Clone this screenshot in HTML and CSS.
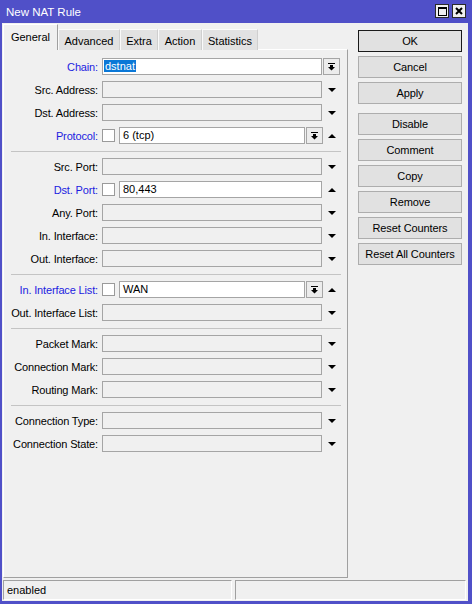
FILE: index.html
```html
<!DOCTYPE html>
<html>
<head>
<meta charset="utf-8">
<link rel="stylesheet" href="styles.css">
</head>
<body>
<div class="window">
  <div class="titlebar">
    <span class="title">New NAT Rule</span>
    <div class="tbtns">
      <span class="tbtn"><svg width="9" height="9" viewBox="0 0 9 9"><rect x="0.5" y="0.5" width="8" height="8" fill="none" stroke="#000"/><rect x="0" y="0" width="9" height="2" fill="#000"/></svg></span>
      <span class="tbtn"><svg width="8" height="8" viewBox="0 0 8 8"><path d="M1 1L7 7M7 1L1 7" stroke="#000" stroke-width="2"/></svg></span>
    </div>
  </div>
  <div class="client">
    <div class="main">
      <div class="left">
        <div class="tabs">
          <div class="tab active w-general">General</div>
          <div class="tab w-adv">Advanced</div>
          <div class="tab w-extra">Extra</div>
          <div class="tab w-action">Action</div>
          <div class="tab w-stats">Statistics</div>
        </div>
        <div class="panel">
          <div class="row">
            <span class="lbl blue">Chain:</span>
            <div class="inp white"><span class="sel">dstnat</span></div>
            <span class="ddbtn"><svg width="7" height="8" viewBox="0 0 7 8"><rect x="0" y="0" width="7" height="1" fill="#000"/><path d="M2 2h3v2h2L3.5 7.5L0 4h2z" fill="#000"/></svg></span>
          </div>
          <div class="row"><span class="lbl">Src. Address:</span><div class="inp"></div><span class="arrow down"></span></div>
          <div class="row"><span class="lbl">Dst. Address:</span><div class="inp"></div><span class="arrow down"></span></div>
          <div class="row">
            <span class="lbl blue">Protocol:</span>
            <span class="chk"></span>
            <div class="inp white short">6 (tcp)</div>
            <span class="ddbtn"><svg width="7" height="8" viewBox="0 0 7 8"><rect x="0" y="0" width="7" height="1" fill="#000"/><path d="M2 2h3v2h2L3.5 7.5L0 4h2z" fill="#000"/></svg></span>
            <span class="arrow up small"></span>
          </div>
          <div class="sep"></div>
          <div class="row"><span class="lbl">Src. Port:</span><div class="inp"></div><span class="arrow down"></span></div>
          <div class="row">
            <span class="lbl blue">Dst. Port:</span>
            <span class="chk"></span>
            <div class="inp white mid">80,443</div>
            <span class="arrow up"></span>
          </div>
          <div class="row"><span class="lbl">Any. Port:</span><div class="inp"></div><span class="arrow down"></span></div>
          <div class="row"><span class="lbl">In. Interface:</span><div class="inp"></div><span class="arrow down"></span></div>
          <div class="row"><span class="lbl">Out. Interface:</span><div class="inp"></div><span class="arrow down"></span></div>
          <div class="sep"></div>
          <div class="row">
            <span class="lbl blue">In. Interface List:</span>
            <span class="chk"></span>
            <div class="inp white short">WAN</div>
            <span class="ddbtn"><svg width="7" height="8" viewBox="0 0 7 8"><rect x="0" y="0" width="7" height="1" fill="#000"/><path d="M2 2h3v2h2L3.5 7.5L0 4h2z" fill="#000"/></svg></span>
            <span class="arrow up small"></span>
          </div>
          <div class="row"><span class="lbl">Out. Interface List:</span><div class="inp"></div><span class="arrow down"></span></div>
          <div class="sep"></div>
          <div class="row"><span class="lbl">Packet Mark:</span><div class="inp"></div><span class="arrow down"></span></div>
          <div class="row"><span class="lbl">Connection Mark:</span><div class="inp"></div><span class="arrow down"></span></div>
          <div class="row"><span class="lbl">Routing Mark:</span><div class="inp"></div><span class="arrow down"></span></div>
          <div class="sep"></div>
          <div class="row"><span class="lbl">Connection Type:</span><div class="inp"></div><span class="arrow down"></span></div>
          <div class="row"><span class="lbl">Connection State:</span><div class="inp"></div><span class="arrow down"></span></div>
        </div>
      </div>
      <div class="btns">
        <div class="btn ok">OK</div>
        <div class="btn">Cancel</div>
        <div class="btn">Apply</div>
        <div class="btn spaced">Disable</div>
        <div class="btn">Comment</div>
        <div class="btn">Copy</div>
        <div class="btn">Remove</div>
        <div class="btn">Reset Counters</div>
        <div class="btn">Reset All Counters</div>
      </div>
    </div>
    <div class="statusbar">
      <div class="status first">enabled</div>
      <div class="status second"></div>
    </div>
  </div>
</div>
</body>
</html>
```

FILE: styles.css
```css
* { box-sizing: border-box; }
html, body { margin: 0; padding: 0; }
body {
  width: 472px;
  height: 604px;
  font-family: "Liberation Sans", Arial, sans-serif;
  font-size: 11px;
  color: #000;
  background: #fff;
}
.window {
  width: 472px;
  height: 604px;
  background: #5050c8;
  display: flex;
  flex-direction: column;
}
.titlebar {
  height: 23px;
  flex: none;
  display: flex;
  align-items: center;
  justify-content: space-between;
  padding: 0 6px 0 6px;
}
.title {
  color: #fff;
  font-size: 11.5px;
}
.tbtns {
  display: flex;
  gap: 3px;
  margin-top: -1px;
}
.tbtn {
  width: 14px;
  height: 14px;
  background: #f0f0f0;
  border: 1px solid #2a2a2a;
  display: flex;
  align-items: center;
  justify-content: center;
}
.tbtn svg { display: block; }
.client {
  flex: 1;
  margin: 0 4px 3px 2px;
  background: #f0f0f0;
  display: flex;
  flex-direction: column;
}
.main {
  flex: 1;
  display: flex;
}
.left {
  width: 345px;
  margin: 1px 0 0 1px;
  display: flex;
  flex-direction: column;
}
.tabs {
  height: 26px;
  margin-bottom: -1px;
  display: flex;
  align-items: flex-end;
  position: relative;
  z-index: 1;
}
.tab {
  height: 21px;
  border: 1px solid;
  border-bottom: none;
  border-color: #fafafa #cfcfcf transparent #fafafa;
  background: #e2e2e2;
  display: flex;
  align-items: center;
  justify-content: center;
  padding-top: 1px;
}
.tab.active {
  height: 26px;
  background: #f0f0f0;
  border-color: #fff #a0a0a0 transparent #fff;
  padding-bottom: 2px;
}
.w-general { width: 55px; }
.w-adv { width: 62px; }
.w-extra { width: 38px; }
.w-action { width: 44px; }
.w-stats { width: 56px; }
.panel {
  flex: 1;
  border: 1px solid;
  border-color: #fff #a0a0a0 #a0a0a0 #fff;
  padding-top: 8px;
  display: flex;
  flex-direction: column;
  gap: 6px;
}
.row {
  height: 17px;
  display: flex;
  align-items: center;
}
.lbl {
  width: 94px;
  margin-right: 4px;
  text-align: right;
  white-space: nowrap;
  letter-spacing: -0.15px;
}
.lbl.blue { color: #1c1ce0; }
.inp {
  width: 220px;
  height: 17px;
  border: 1px solid #a5a5a5;
  background: #f0f0f0;
  padding-left: 3px;
  line-height: 15px;
  white-space: nowrap;
}
.inp.white { background: #fff; }
.inp.short { width: 186px; }
.inp.mid { width: 203px; }
.sel {
  background: #0a78d7;
  color: #fff;
  padding: 0 1px;
  margin-left: -2px;
}
.chk {
  width: 13px;
  height: 13px;
  border: 1px solid #9a9a9a;
  background: #fff;
  margin-right: 4px;
}
.ddbtn {
  width: 17px;
  height: 17px;
  margin-left: 1px;
  border: 1px solid #a5a5a5;
  background: #ececec;
  display: flex;
  align-items: center;
  justify-content: center;
}
.ddbtn svg { display: block; }
.arrow {
  width: 20px;
  height: 17px;
  display: flex;
  align-items: center;
  justify-content: center;
}
.arrow.small { width: 18px; }
.arrow::before {
  content: "";
  width: 0;
  height: 0;
  border-left: 4px solid transparent;
  border-right: 4px solid transparent;
}
.arrow.down::before { border-top: 4px solid #000; }
.arrow.up::before { border-bottom: 4px solid #000; }
.sep {
  width: 330px;
  height: 1px;
  margin: 1px 0 0 7px;
  background: #c4c4c4;
}
.btns {
  width: 104px;
  margin: 7px 0 0 10px;
  display: flex;
  flex-direction: column;
  gap: 4px;
}
.btn {
  height: 22px;
  border: 1px solid #adadad;
  background: #e1e1e1;
  display: flex;
  align-items: center;
  justify-content: center;
  letter-spacing: -0.1px;
}
.btn.ok { border-color: #1a1a1a; }
.btn.spaced { margin-top: 5px; }
.statusbar {
  height: 20px;
  margin: 2px 2px 1px 1px;
  display: flex;
  gap: 3px;
}
.status {
  height: 20px;
  border: 1px solid;
  border-color: #a0a0a0 #fff #fff #a0a0a0;
  padding-left: 3px;
  line-height: 18px;
}
.status.first { width: 229px; }
.status.second { flex: 1; }
```
